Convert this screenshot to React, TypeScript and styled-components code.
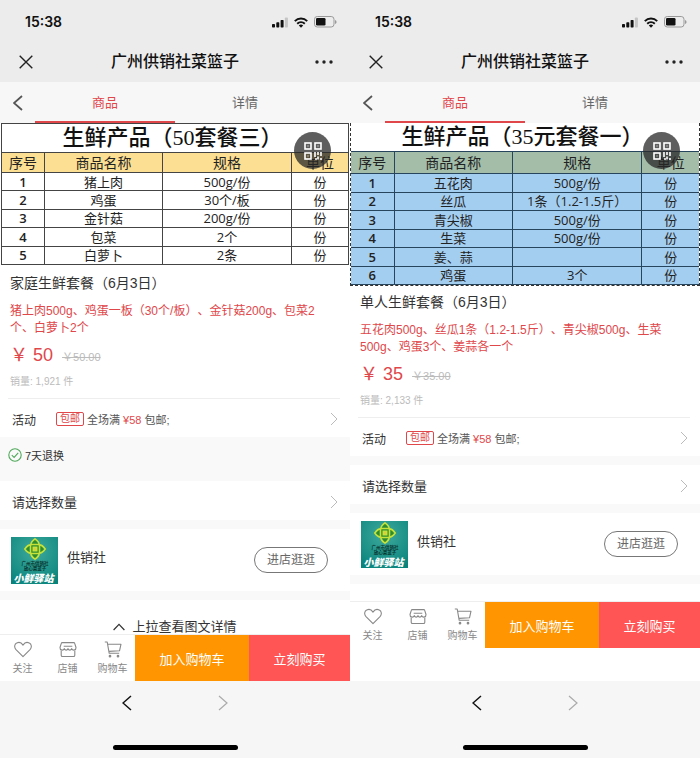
import React from "react";
import styled, { createGlobalStyle, css } from "styled-components";

const sans = `"Liberation Sans", "Noto Sans CJK SC", sans-serif`;
const sheetSans = `"Open Sans", "Noto Sans CJK SC", sans-serif`;
const sheetSerif = `"Liberation Serif", "Noto Sans CJK SC", serif`;

const GlobalStyle = createGlobalStyle`
  *, *::before, *::after { box-sizing: border-box; }
  body { margin: 0; background: #fff; font-family: ${sans}; color: #333; text-spacing-trim: space-all; }
  button { font: inherit; color: inherit; background: none; border: 0; padding: 0; cursor: pointer; }
  a { color: inherit; text-decoration: none; }
  h1, h2, p { margin: 0; font-weight: 400; }
  svg { display: block; flex: none; }
`;

const Screens = styled.main`
  display: grid;
  grid-template-columns: 1fr 1fr;
  min-height: 100vh;
`;

const Phone = styled.section`
  display: flex;
  flex-direction: column;
  min-width: 0;
  background: #fff;
`;

const TopArea = styled.header`
  background: #ececec;
`;

const StatusBar = styled.div`
  display: flex;
  align-items: center;
  justify-content: space-between;
  height: 42px;
  padding: 2px 13px 0 25px;
  font: 600 14px/18px Inter, sans-serif;
  color: #111;
`;

const StatusIcons = styled.div`
  display: flex;
  align-items: center;
  gap: 6px;
`;

const TitleBar = styled.div`
  display: grid;
  grid-template-columns: 52px 1fr 52px;
  align-items: center;
  height: 40px;
`;

const PageTitle = styled.h1`
  font-size: 16px;
  line-height: 22px;
  font-weight: 500;
  text-align: center;
  color: #111;
`;

const BarButton = styled.button`
  display: flex;
  align-items: center;
  justify-content: center;
  height: 100%;
`;

const Tabs = styled.nav`
  display: grid;
  grid-template-columns: 35px 1fr 1fr 35px;
  height: 41px;
  background: #f7f7f7;
`;

const Tab = styled.button<{ $active?: boolean }>`
  padding-top: 2px;
  border-bottom: 2px solid ${(p) => (p.$active ? "#e0474b" : "transparent")};
  font-size: 13px;
  line-height: 18px;
  color: ${(p) => (p.$active ? "#e0474b" : "#666")};
`;

const Picture = styled.div<{ $selected: boolean }>`
  position: relative;
  ${(p) =>
    p.$selected
      ? css`
          border: 1px dashed #333;
          border-top: 0;
        `
      : css`
          padding: 0 1px 2px;
        `}
`;

const Sheet = styled.table<{ $selected: boolean }>`
  width: 100%;
  height: ${(p) => (p.$selected ? 134 : 113)}px;
  table-layout: fixed;
  border-collapse: collapse;
  font: 13px/16px ${sheetSans};
  color: #222;
  background: ${(p) => (p.$selected ? "#a4cef0" : "#fff")};

  th, td {
    padding: 0;
    height: 18px;
    text-align: center;
    border: 1px solid ${(p) => (p.$selected ? "#28455e" : "#444")};
  }
  th {
    height: ${(p) => (p.$selected ? 22 : 20)}px;
    font-size: 14px;
    font-weight: 400;
    background: ${(p) => (p.$selected ? "#a3bda9" : "#fcdf92")};
  }
  td:first-child { font-weight: 600; }
  ${(p) =>
    p.$selected &&
    css`
      th:first-child, td:first-child { border-left: 0; }
      th:last-child, td:last-child { border-right: 0; }
    `}
`;

const SheetTitle = styled.caption<{ $selected: boolean }>`
  height: ${(p) => (p.$selected ? 28 : 29)}px;
  padding-right: 5px;
  background: #fff;
  border: ${(p) => (p.$selected ? "0" : "1px solid #444")};
  border-bottom: 0;
  font: 500 22px/27px ${sheetSerif};
  white-space: nowrap;
  color: #111;
`;

const ColIndex = styled.col`
  width: 12.4%;
`;
const ColName = styled.col`
  width: 34%;
`;
const ColUnit = styled.col`
  width: 16.4%;
`;

const CodeButton = styled.button`
  position: absolute;
  top: 9px;
  right: 19px;
  display: flex;
  align-items: center;
  justify-content: center;
  width: 37px;
  height: 37px;
  border-radius: 50%;
  background: rgba(40, 40, 40, 0.75);
`;

const Summary = styled.div`
  margin: 0 10px 0 8px;
  padding: 6px 20px 9px 2px;
  border-bottom: 1px solid #eee;
`;

const ProductName = styled.h2`
  font-size: 14px;
  line-height: 20px;
`;

const Description = styled.p`
  margin-top: 10px;
  font-size: 12px;
  line-height: 17px;
  color: #e0474b;
`;

const PriceLine = styled.p`
  display: flex;
  align-items: baseline;
  gap: 9px;
  margin-top: 6px;
  font-size: 18px;
  line-height: 24px;
  color: #e0474b;
`;

const OldPrice = styled.s`
  font-size: 11px;
  color: #bbb;
`;

const Sales = styled.p`
  margin-top: 6px;
  font-size: 10px;
  line-height: 14px;
  color: #bbb;
`;

const Row = styled.button<{ $large?: boolean }>`
  display: flex;
  align-items: center;
  width: 100%;
  height: ${(p) => (p.$large ? 39 : 38)}px;
  padding: ${(p) => (p.$large ? "2px 12px 0" : "2px 12px 0")};
  font-size: ${(p) => (p.$large ? 13 : 12)}px;
  text-align: left;
`;

const Grow = styled.span`
  flex: 1;
`;

const Offer = styled.span`
  display: flex;
  flex: 1;
  align-items: center;
  gap: 3px;
  margin-left: 20px;
  font-size: 11px;
  color: #555;
`;

const Badge = styled.span`
  padding: 0 3px;
  border: 1px solid #e0474b;
  border-radius: 2px;
  font-size: 10px;
  line-height: 12px;
  color: #e0474b;
`;

const Red = styled.span`
  color: #e0474b;
`;

const Guarantee = styled.div`
  display: flex;
  align-items: center;
  gap: 3px;
  height: 35px;
  padding-left: 8px;
  background: #f9f9f9;
  font-size: 11px;
`;

const Gap = styled.div`
  height: 9px;
  background: #f9f9f9;
`;

const Shop = styled.div`
  display: flex;
  align-items: center;
  height: 62px;
  padding: 0 22px 0 11px;
`;

const ShopName = styled.span`
  flex: 1;
  padding: 0 9px 4px;
  font-size: 13px;
  line-height: 18px;
`;

const VisitLink = styled.a`
  padding: 0 12px;
  border: 1px solid #777;
  border-radius: 13px;
  font-size: 12px;
  line-height: 24px;
  color: #666;
`;

const PullHint = styled.div`
  display: flex;
  align-items: center;
  justify-content: center;
  gap: 7px;
  height: 34px;
  padding-top: 20px;
  overflow: hidden;
  font-size: 13px;
  line-height: 18px;
`;

const Spacer = styled.div`
  height: 17px;
`;

const ActionBar = styled.div`
  display: grid;
  grid-template-columns: 45fr 45fr 45fr 114fr 101fr;
  height: 47px;
  border-top: 1px solid #eee;
`;

const IconAction = styled.button`
  display: flex;
  flex-direction: column;
  align-items: center;
  gap: 4px;
  padding-top: 6px;
  font-size: 10px;
  line-height: 14px;
  color: #888;
`;

const BuyButton = styled.button<{ $tone: string }>`
  background: ${(p) => p.$tone};
  font-size: 13px;
  color: #fff;
`;

const BrowserBar = styled.footer`
  display: flex;
  flex-direction: column;
  align-items: center;
  justify-content: space-between;
  height: 77px;
  margin-top: auto;
  padding: 14px 0 8px;
  background: #f6f6f6;
`;

const BrowserNav = styled.div`
  display: flex;
  gap: 86px;
`;

const HomeIndicator = styled.div`
  width: 125px;
  height: 5px;
  border-radius: 3px;
  background: #000;
`;

type ChevronProps = { dir: "left" | "right"; w: number; h: number; color: string; stroke: number };

function Chevron({ dir, w, h, color, stroke }: ChevronProps) {
  const a = dir === "left" ? w - 1 : 1;
  const b = dir === "left" ? 1 : w - 1;
  return (
    <svg width={w} height={h} fill="none" stroke={color} strokeWidth={stroke} aria-hidden>
      <path d={`M${a} 1L${b} ${h / 2}L${a} ${h - 1}`} />
    </svg>
  );
}

const SignalIcon = () => (
  <svg width="16" height="11" fill="#111" aria-hidden>
    <rect x="0" y="7" width="3" height="3.5" rx=".7" />
    <rect x="4.3" y="5.3" width="3" height="5.2" rx=".7" />
    <rect x="8.6" y="3" width="3" height="7.5" rx=".7" />
    <rect x="12.9" y="0.5" width="3" height="10" rx=".7" fill="#c5c5c5" />
  </svg>
);

const WifiIcon = () => (
  <svg width="14" height="11" fill="none" stroke="#111" strokeWidth="2" aria-hidden>
    <path d="M.8 4.1a8.9 8.9 0 0 1 12.4 0" />
    <path d="M3.2 6.7a5.5 5.5 0 0 1 7.6 0" />
    <path d="M7 10.7L4.8 8.5a3.2 3.2 0 0 1 4.4 0z" fill="#111" stroke="none" />
  </svg>
);

const BatteryIcon = () => (
  <svg width="23" height="12" aria-hidden>
    <rect x=".5" y=".5" width="19.5" height="10.5" rx="2.8" fill="none" stroke="#999" />
    <rect x="2" y="2" width="9.5" height="7.5" rx="1.3" fill="#111" />
    <path d="M21 4v4q1.6-.6 1.6-2T21 4z" fill="#999" />
  </svg>
);

const CloseIcon = () => (
  <svg width="14" height="14" stroke="#222" strokeWidth="1.4" aria-hidden>
    <path d="M.7.7l12.6 12.6M13.3.7L.7 13.3" />
  </svg>
);

const MoreIcon = () => (
  <svg width="18" height="4" fill="#222" aria-hidden>
    <circle cx="2" cy="2" r="1.7" />
    <circle cx="9" cy="2" r="1.7" />
    <circle cx="16" cy="2" r="1.7" />
  </svg>
);

const CodeIcon = () => (
  <svg width="18" height="18" fill="none" stroke="#fff" strokeWidth="1.6" aria-hidden>
    <rect x="1" y="1" width="6" height="6" />
    <rect x="11" y="1" width="6" height="6" />
    <rect x="1" y="11" width="6" height="6" />
    <path d="M3.5 4h1M13.5 4h1M3.5 14h1" strokeWidth="1" />
    <path d="M11 10v5M14 10v3M17 10v4M11 17h2M14 14.5v3M17 16v2" />
  </svg>
);

const CheckIcon = () => (
  <svg width="14" height="14" fill="none" stroke="#4fa85a" strokeWidth="1.1" aria-hidden>
    <circle cx="7" cy="7" r="6.2" />
    <path d="M3.8 7.2l2.3 2.2 4.1-4.5" />
  </svg>
);

const UpIcon = () => (
  <svg width="12" height="8" fill="none" stroke="#333" strokeWidth="1.2" aria-hidden>
    <path d="M.6 7L6 1.3 11.4 7" />
  </svg>
);

const HeartIcon = () => (
  <svg width="18" height="17" fill="none" stroke="#888" strokeWidth="1.1" strokeLinejoin="round" aria-hidden>
    <path d="M9 15.6L2 8.6C-.2 6 .6 3.2 2.6 2.1 4.9.7 7.4 1.6 9 4.1c1.6-2.5 4.1-3.4 6.4-2 2 1.1 2.8 3.9.6 6.5z" />
  </svg>
);

const StoreIcon = () => (
  <svg width="18" height="17" fill="none" stroke="#888" strokeWidth="1.1" strokeLinejoin="round" aria-hidden>
    <path d="M3.3 1.6h11.4q.8 0 1 .8l1.3 4.1c.2 3-3.4 3.4-4.3 1.1-.8 2-3 2-3.7 0-.7 2-2.9 2-3.7 0C4.4 9.9.8 9.5 1 6.500l1.300-4.100q.2-.8 1-.8z" />
    <path d="M4.7 5.2h8.6M2.200 9.500v4.700q0 1.300 1.300 1.300h11q1.300 0 1.300-1.300V9.500" />
  </svg>
);

const CartIcon = () => (
  <svg width="18" height="17" fill="none" stroke="#888" strokeWidth="1.1" strokeLinejoin="round" aria-hidden>
    <path d="M.8 1h2.4l2 11.3h10M3.8 3.2H17l-1.5 6.6-10.6.6" />
    <circle cx="6" cy="15.2" r=".8" fill="#888" />
    <circle cx="14" cy="15.2" r=".8" fill="#888" />
  </svg>
);

const ShopLogo = () => (
  <svg width="47" height="47" viewBox="0 0 47 47" role="img" aria-label="小鲜驿站">
    <defs>
      <radialGradient id="shop-bg" cx=".5" cy=".3" r=".8">
        <stop offset="0" stopColor="#3fa99c" />
        <stop offset="1" stopColor="#08837c" />
      </radialGradient>
    </defs>
    <rect width="47" height="47" fill="url(#shop-bg)" />
    <g fill="#2d8c2f" stroke="#c6e23a" strokeWidth="1.6">
      <path d="M24 1.800q4.500 3.200 4.100 6.200h-8.200q-.4-3 4.100-6.200zM24 22.200q4.500-3.200 4.100-6.200h-8.200q-.4 3 4.100 6.200z" />
      <path d="M13.800 12q3.200-4.500 6.200-4.100v8.200q-3 .4-6.200-4.100zM34.200 12q-3.200-4.500-6.200-4.100v8.200q3 .4 6.200-4.100z" />
      <rect x="19.500" y="7.500" width="9" height="9" rx="1" />
      <rect x="22.300" y="10.300" width="3.400" height="3.400" fill="#e6c63a" />
    </g>
    <g textAnchor="middle" fontFamily="Noto Sans CJK SC, sans-serif">
      <text x="24" y="27.500" fontSize="4.500" fontWeight="700" fill="#07352f">广州市供销社</text>
      <text x="24" y="33" fontSize="4.500" fontWeight="700" fill="#07352f">放心菜篮子</text>
      <text x="22.500" y="44.500" fontSize="10" fontWeight="900" fontStyle="italic" fill="#fff">小鲜驿站</text>
    </g>
  </svg>
);

type Product = {
  sheetTitle: string;
  selected: boolean;
  rows: [string, string, string][];
  name: string;
  description: string;
  price: string;
  oldPrice: string;
  sales: string;
  guarantee?: string;
  pullHint?: string;
};

const products: Product[] = [
  {
    sheetTitle: "生鲜产品（50套餐三）",
    selected: false,
    rows: [
      ["1", "猪上肉", "500g/份"],
      ["2", "鸡蛋", "30个/板"],
      ["3", "金针菇", "200g/份"],
      ["4", "包菜", "2个"],
      ["5", "白萝卜", "2条"],
    ],
    name: "家庭生鲜套餐（6月3日）",
    description: "猪上肉500g、鸡蛋一板（30个/板）、金针菇200g、包菜2个、白萝卜2个",
    price: "50",
    oldPrice: "50.00",
    sales: "1,921",
    guarantee: "7天退换",
    pullHint: "上拉查看图文详情",
  },
  {
    sheetTitle: "生鲜产品（35元套餐一）",
    selected: true,
    rows: [
      ["1", "五花肉", "500g/份"],
      ["2", "丝瓜", "1条（1.2-1.5斤）"],
      ["3", "青尖椒", "500g/份"],
      ["4", "生菜", "500g/份"],
      ["5", "姜、蒜", ""],
      ["6", "鸡蛋", "3个"],
    ],
    name: "单人生鲜套餐（6月3日）",
    description: "五花肉500g、丝瓜1条（1.2-1.5斤）、青尖椒500g、生菜500g、鸡蛋3个、姜蒜各一个",
    price: "35",
    oldPrice: "35.00",
    sales: "2,133",
  },
];

const RowArrow = () => <Chevron dir="right" w={8} h={14} color="#bbb" stroke={1} />;

function ProductScreen({ product: p }: { product: Product }) {
  return (
    <Phone>
      <TopArea>
        <StatusBar>
          <span>15:38</span>
          <StatusIcons>
            <SignalIcon />
            <WifiIcon />
            <BatteryIcon />
          </StatusIcons>
        </StatusBar>
        <TitleBar>
          <BarButton aria-label="关闭"><CloseIcon /></BarButton>
          <PageTitle>广州供销社菜篮子</PageTitle>
          <BarButton aria-label="更多"><MoreIcon /></BarButton>
        </TitleBar>
      </TopArea>
      <Tabs>
        <BarButton aria-label="返回">
          <Chevron dir="left" w={10} h={16} color="#555" stroke={1.8} />
        </BarButton>
        <Tab $active>商品</Tab>
        <Tab>详情</Tab>
      </Tabs>

      <Picture $selected={p.selected}>
        <Sheet $selected={p.selected}>
          <SheetTitle $selected={p.selected}>{p.sheetTitle}</SheetTitle>
          <colgroup>
            <ColIndex />
            <ColName />
            <col />
            <ColUnit />
          </colgroup>
          <thead>
            <tr>
              <th>序号</th>
              <th>商品名称</th>
              <th>规格</th>
              <th>单位</th>
            </tr>
          </thead>
          <tbody>
            {p.rows.map(([no, item, spec]) => (
              <tr key={no}>
                <td>{no}</td>
                <td>{item}</td>
                <td>{spec}</td>
                <td>份</td>
              </tr>
            ))}
          </tbody>
        </Sheet>
        <CodeButton aria-label="二维码"><CodeIcon /></CodeButton>
      </Picture>

      <Summary>
        <ProductName>{p.name}</ProductName>
        <Description>{p.description}</Description>
        <PriceLine>
          <span>￥ {p.price}</span>
          <OldPrice>￥{p.oldPrice}</OldPrice>
        </PriceLine>
        <Sales>销量: {p.sales} 件</Sales>
      </Summary>
      <Row>
        活动
        <Offer>
          <Badge>包邮</Badge>
          <span>全场满 <Red>¥58</Red> 包邮;</span>
        </Offer>
        <RowArrow />
      </Row>
      {p.guarantee && (
        <Guarantee>
          <CheckIcon />
          {p.guarantee}
        </Guarantee>
      )}
      <Gap />
      <Row $large>
        <Grow>请选择数量</Grow>
        <RowArrow />
      </Row>
      <Gap />
      <Shop>
        <ShopLogo />
        <ShopName>供销社</ShopName>
        <VisitLink href="#shop">进店逛逛</VisitLink>
      </Shop>
      <Gap />
      {p.pullHint ? (
        <PullHint>
          <UpIcon />
          {p.pullHint}
        </PullHint>
      ) : (
        <Spacer />
      )}
      <ActionBar>
        <IconAction><HeartIcon />关注</IconAction>
        <IconAction><StoreIcon />店铺</IconAction>
        <IconAction><CartIcon />购物车</IconAction>
        <BuyButton $tone="#ff9500">加入购物车</BuyButton>
        <BuyButton $tone="#ff5555">立刻购买</BuyButton>
      </ActionBar>
      <BrowserBar>
        <BrowserNav>
          <BarButton aria-label="后退">
            <Chevron dir="left" w={10} h={16} color="#111" stroke={1.5} />
          </BarButton>
          <BarButton aria-label="前进">
            <Chevron dir="right" w={10} h={16} color="#aaa" stroke={1.2} />
          </BarButton>
        </BrowserNav>
        <HomeIndicator />
      </BrowserBar>
    </Phone>
  );
}

export default function App() {
  return (
    <>
      <GlobalStyle />
      <Screens>
        {products.map((product) => (
          <ProductScreen key={product.name} product={product} />
        ))}
      </Screens>
    </>
  );
}
